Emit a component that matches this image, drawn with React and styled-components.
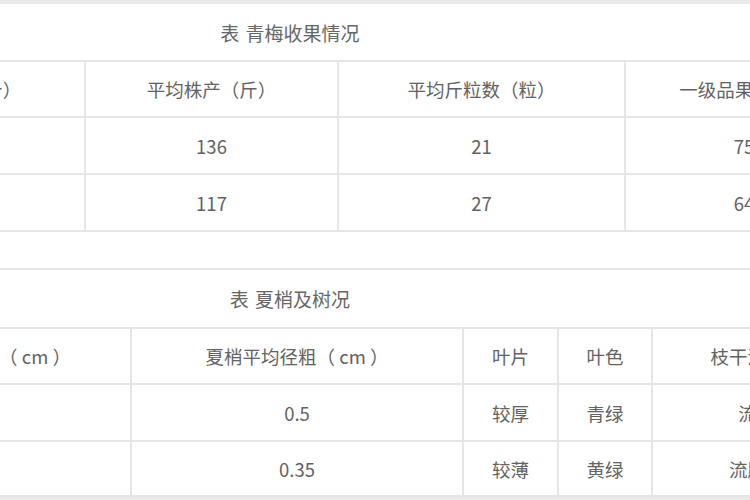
import React from 'react';
import styled, { createGlobalStyle } from 'styled-components';

const GlobalStyle = createGlobalStyle`
  html, body {
    margin: 0;
    padding: 0;
    background: #ffffff;
    overflow: hidden;
  }
`;

const harvest = {
  title: '表 青梅收果情况',
  cols: [256, 253, 287, 254],
  head: ['单株产量（斤）', '平均株产（斤）', '平均斤粒数（粒）', '一级品果率（%）'],
  rows: [
    ['青梅A', '136', '21', '75%'],
    ['青梅B', '117', '27', '64%'],
  ],
};

const summer = {
  title: '表 夏梢及树况',
  cols: [302, 332, 95, 94, 227],
  head: ['夏梢平均长度（ cm ）', '夏梢平均径粗（ cm ）', '叶片', '叶色', '枝干流胶情况'],
  rows: [
    ['', '0.5', '较厚', '青绿', '流胶少'],
    ['', '0.35', '较薄', '黄绿', '流胶较多'],
  ],
};

const DataTable = ({ data, heights }) => (
  <Table>
    <colgroup>
      {data.cols.map((w, i) => (
        <col key={i} style={{ width: w }} />
      ))}
    </colgroup>
    <tbody>
      <Row $h={heights[0]}>
        {data.head.map((h, i) => (
          <Cell key={i}>{h}</Cell>
        ))}
      </Row>
      {data.rows.map((r, ri) => (
        <Row key={ri} $h={heights[ri + 1]}>
          {r.map((c, ci) => (
            <Cell key={ci}>{c}</Cell>
          ))}
        </Row>
      ))}
    </tbody>
  </Table>
);

const App = () => {
  return (
    <Page>
      <GlobalStyle />
      <TopBar />
      <Sheet>
        <Caption $h={56}>{harvest.title}</Caption>
        <DataTable data={harvest} heights={[56, 57, 57]} />
        <Gap />
        <Block>
          <Caption $h={57}>{summer.title}</Caption>
          <DataTable data={summer} heights={[56, 57, 55]} />
        </Block>
      </Sheet>
      <BottomBar />
    </Page>
  );
};

export default App;

const Page = styled.div`
  width: 750px;
  height: 500px;
  overflow: hidden;
  display: flex;
  flex-direction: column;
  background: #ffffff;
  font-family: 'Noto Sans CJK SC', 'Noto Sans', sans-serif;
  color: #626262;
`;

const TopBar = styled.div`
  height: 4px;
  flex-shrink: 0;
  background: #e9e9e9;
`;

const Sheet = styled.div`
  width: 1050px;
  margin-left: -171px;
  display: flex;
  flex-direction: column;
  flex-shrink: 0;
`;

const Caption = styled.div`
  height: ${(p) => p.$h}px;
  display: flex;
  align-items: center;
  justify-content: center;
  padding-right: 128px;
  font-size: 19px;
  word-spacing: 2px;
  color: #666666;
`;

const Block = styled.div`
  border-top: 2px solid #e6e6e6;
`;

const Gap = styled.div`
  height: 36px;
`;

const Table = styled.table`
  width: 100%;
  table-layout: fixed;
  border-collapse: collapse;
  border-top: 2px solid #e6e6e6;
  border-bottom: 2px solid #e6e6e6;
`;

const Row = styled.tr`
  height: ${(p) => p.$h}px;
  & + & {
    border-top: 2px solid #e6e6e6;
  }
`;

const Cell = styled.td`
  padding: 0;
  text-align: center;
  vertical-align: middle;
  font-size: 18.5px;
  white-space: pre;
  overflow: hidden;
  & + & {
    border-left: 2px solid #e6e6e6;
  }
`;

const BottomBar = styled.div`
  flex: 1;
  background: #e9e9e9;
`;
